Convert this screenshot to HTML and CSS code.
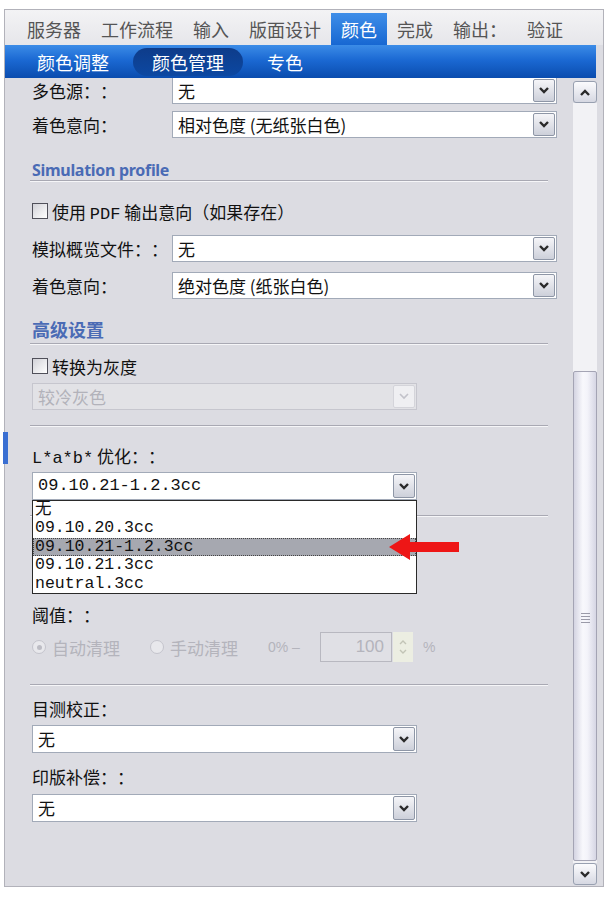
FILE: index.html
```html
<!DOCTYPE html>
<html lang="zh">
  <head>
    <meta charset="UTF-8" />
    <meta name="viewport" content="width=device-width, initial-scale=1.0" />
    <title>颜色管理</title>
    <link rel="stylesheet" href="styles.css">
  </head>
  <body>
    <div class="panel">
      <div class="tabs">
        <span class="tab">服务器</span>
        <span class="tab">工作流程</span>
        <span class="tab">输入</span>
        <span class="tab">版面设计</span>
        <span class="tab active">颜色</span>
        <span class="tab">完成</span>
        <span class="tab">输出：</span>
        <span class="tab">验证</span>
      </div>

      <div class="subtabs">
        <span class="subtab">颜色调整</span>
        <span class="subtab current">颜色管理</span>
        <span class="subtab">专色</span>
      </div>

      <div class="body">
        <div class="marker"></div>

        <div class="content">
          <div class="row row-a">
            <span class="label">多色源：：</span>
            <div class="select">
              <span class="value">无</span>
              <span class="arrow"><svg width="10" height="7" viewBox="0 0 10 7"><polyline points="1,1 5,5 9,1" /></svg></span>
            </div>
          </div>
          <div class="row row-b">
            <span class="label">着色意向：</span>
            <div class="select">
              <span class="value">相对色度 (无纸张白色)</span>
              <span class="arrow"><svg width="10" height="7" viewBox="0 0 10 7"><polyline points="1,1 5,5 9,1" /></svg></span>
            </div>
          </div>

          <div class="section-title en sim-title">Simulation profile</div>

          <div class="check-row check-pdf">
            <span class="checkbox"></span>
            <span>使用 <span class="mono">PDF</span> 输出意向（如果存在）</span>
          </div>

          <div class="row row-c">
            <span class="label">模拟概览文件：：</span>
            <div class="select">
              <span class="value">无</span>
              <span class="arrow"><svg width="10" height="7" viewBox="0 0 10 7"><polyline points="1,1 5,5 9,1" /></svg></span>
            </div>
          </div>
          <div class="row row-d">
            <span class="label">着色意向：</span>
            <div class="select">
              <span class="value">绝对色度 (纸张白色)</span>
              <span class="arrow"><svg width="10" height="7" viewBox="0 0 10 7"><polyline points="1,1 5,5 9,1" /></svg></span>
            </div>
          </div>

          <div class="section-title cn adv-title">高级设置</div>

          <div class="check-row check-gray">
            <span class="checkbox"></span>
            <span>转换为灰度</span>
          </div>

          <div class="select disabled gray-select">
            <span class="value">较冷灰色</span>
            <span class="arrow"><svg width="10" height="7" viewBox="0 0 10 7"><polyline points="1,1 5,5 9,1" /></svg></span>
          </div>

          <div class="separator sep-1"></div>

          <div class="label-line lab-label"><span class="mono">L*a*b*</span> 优化：：</div>

          <div class="select-wrap">
            <div class="select tall">
              <span class="value mono">09.10.21-1.2.3cc</span>
              <span class="arrow"><svg width="10" height="7" viewBox="0 0 10 7"><polyline points="1,1 5,5 9,1" /></svg></span>
            </div>
            <div class="dropdown mono">
              <div class="item">无</div>
              <div class="item">09.10.20.3cc</div>
              <div class="item sel">09.10.21-1.2.3cc</div>
              <div class="item">09.10.21.3cc</div>
              <div class="item">neutral.3cc</div>
            </div>
            <svg class="pointer" width="70" height="26" viewBox="0 0 70 26">
              <path d="M0 13 L21 0 L21 8 L70 8 L70 18 L21 18 L21 26 Z" />
            </svg>
          </div>

          <div class="separator sep-2"></div>

          <div class="label-line threshold-label">阈值：：</div>

          <div class="radio-row">
            <span class="radio on"></span>
            <span class="radio-label">自动清理</span>
            <span class="radio"></span>
            <span class="radio-label">手动清理</span>
            <span class="range">0% –</span>
            <span class="num">100</span>
            <span class="spin">
              <svg width="8" height="5" viewBox="0 0 8 5"><polyline points="1,4 4,1 7,4" /></svg>
              <svg width="8" height="5" viewBox="0 0 8 5"><polyline points="1,1 4,4 7,1" /></svg>
            </span>
            <span class="percent">%</span>
          </div>

          <div class="separator sep-3"></div>

          <div class="label-line visual-label">目测校正：</div>
          <div class="select tall visual-select">
            <span class="value">无</span>
            <span class="arrow"><svg width="10" height="7" viewBox="0 0 10 7"><polyline points="1,1 5,5 9,1" /></svg></span>
          </div>

          <div class="label-line plate-label">印版补偿：：</div>
          <div class="select tall plate-select">
            <span class="value">无</span>
            <span class="arrow"><svg width="10" height="7" viewBox="0 0 10 7"><polyline points="1,1 5,5 9,1" /></svg></span>
          </div>
        </div>

        <div class="scrollbar">
          <div class="sb-btn up"><svg width="10" height="7" viewBox="0 0 10 7"><polyline points="1,6 5,2 9,6" /></svg></div>
          <div class="sb-track">
            <div class="sb-thumb"><div class="grip"></div></div>
          </div>
          <div class="sb-btn down"><svg width="10" height="7" viewBox="0 0 10 7"><polyline points="1,1 5,5 9,1" /></svg></div>
        </div>
      </div>
    </div>
  </body>
</html>
```

FILE: styles.css
```css
* {
    box-sizing: border-box;
}

body {
    margin: 0;
    background: #fff;
    font-family: "Noto Sans CJK SC", sans-serif;
    color: #111;
    text-spacing-trim: space-all;
}

.mono {
    font-family: "Liberation Mono", "Noto Sans CJK SC", monospace;
}

.panel {
    width: 600px;
    height: 878px;
    margin: 9px 0 0 4px;
    border: 1px solid #b2b2ba;
    background: #dcdce2;
    display: flex;
    flex-direction: column;
}

/* top tabs */
.tabs {
    height: 35px;
    padding: 3px 0 0 12px;
    display: flex;
    background: linear-gradient(#f3f3f5, #e6e6ea);
    flex-shrink: 0;
}

.tab {
    padding: 0 10px;
    height: 32px;
    line-height: 32px;
    font-size: 18px;
    color: #555;
}

.tab.active {
    background: linear-gradient(#3f8ee8, #1767d2);
    color: #fff;
}

.subtabs {
    height: 33px;
    margin-right: 7px;
    padding-left: 13px;
    display: flex;
    align-items: center;
    gap: 5px;
    background: linear-gradient(#3c8ce7 0%, #1b69d3 45%, #0a4cae 100%);
    flex-shrink: 0;
}

.subtab {
    padding: 0 19px;
    height: 28px;
    line-height: 28px;
    font-size: 18px;
    color: #fff;
    border-radius: 14px;
}

.subtab.current {
    background: linear-gradient(#0e3c8a, #0c48a2);
}

/* body */
.body {
    flex: 1;
    min-height: 0;
    display: flex;
    position: relative;
}

.marker {
    position: absolute;
    left: -2px;
    top: 354px;
    width: 5px;
    height: 32px;
    background: #3a6fd2;
}

.content {
    flex: 1;
    overflow: hidden;
    padding-left: 27px;
    display: flex;
    flex-direction: column;
}

.content > * {
    flex-shrink: 0;
}

.row {
    display: flex;
    align-items: center;
}

.row .label {
    width: 140px;
    font-size: 17px;
    white-space: nowrap;
}

.select {
    width: 385px;
    height: 27px;
    display: flex;
    background: #fff;
    border: 1px solid #a2aab8;
    font-size: 17px;
}

.select.tall {
    height: 28px;
}

.select .value {
    flex: 1;
    padding-left: 5px;
    line-height: 25px;
    white-space: nowrap;
}

.select .arrow {
    width: 22px;
    margin: 1px 1px 1px 0;
    border: 1px solid #8e96a6;
    border-radius: 2px;
    background: linear-gradient(#f5f5f8, #cdd0da);
    display: flex;
    align-items: center;
    justify-content: center;
}

.select .arrow polyline,
.sb-btn polyline {
    fill: none;
    stroke: #2a2a2a;
    stroke-width: 2.4;
}

.select.disabled {
    background: #e2e2e6;
    border-color: #c6c6ce;
    color: #b2b2ba;
}

.select.disabled .arrow {
    border-color: #d4d4da;
    background: #efeff2;
}

.select.disabled .arrow polyline {
    stroke: #c2c2ca;
    stroke-width: 1.6;
}

.section-title {
    width: 518px;
    margin-left: -2px;
    padding-left: 2px;
    height: 21px;
    line-height: 20px;
    border-bottom: 1px solid #a9a9b3;
    box-shadow: 0 1px 0 #f6f6f8;
    color: #4a6bb5;
    font-weight: 700;
}

.section-title.en {
    font-family: "Noto Sans", sans-serif;
    font-size: 16px;
    letter-spacing: -0.3px;
}

.section-title.cn {
    height: 25px;
    padding-bottom: 4px;
    font-size: 18px;
}

.check-row {
    display: flex;
    align-items: center;
    height: 20px;
    font-size: 17px;
}

.checkbox {
    width: 16px;
    height: 16px;
    margin-right: 4px;
    border: 1px solid #50505a;
    background: linear-gradient(135deg, #d2d2d8, #fff);
}

.separator {
    width: 518px;
    margin-left: -2px;
    border-top: 1px solid #a9a9b3;
    border-bottom: 1px solid #f6f6f8;
}

.label-line {
    height: 20px;
    line-height: 20px;
    font-size: 17px;
}

/* dropdown list */
.select-wrap {
    position: relative;
    width: 385px;
}

.dropdown {
    position: absolute;
    top: 100%;
    left: 0;
    width: 385px;
    z-index: 2;
    background: #fff;
    border: 1px solid #2a2a2a;
    font-size: 16.5px;
}

.dropdown .item {
    height: 18.4px;
    line-height: 18px;
    padding-left: 2px;
    white-space: nowrap;
}

.dropdown .item.sel {
    background: #a6a8b0;
    outline: 1px dotted #444;
    outline-offset: -1px;
}

.pointer {
    position: absolute;
    left: 357px;
    top: 62px;
    z-index: 3;
}

.pointer path {
    fill: #ee1616;
}

/* radio row */
.radio-row {
    display: flex;
    align-items: center;
    height: 30px;
    font-size: 17px;
    color: #b4b4bc;
}

.radio {
    width: 14px;
    height: 14px;
    margin-right: 6px;
    border-radius: 50%;
    border: 1px solid #c4c4cc;
    background: #e8e8ec;
    display: flex;
    align-items: center;
    justify-content: center;
}

.radio.on::after {
    content: "";
    width: 5px;
    height: 5px;
    border-radius: 50%;
    background: #bcbcc4;
}

.radio-label {
    margin-right: 30px;
}

.range {
    width: 52px;
    font-family: "Liberation Sans", sans-serif;
    font-size: 14px;
}

.num {
    width: 72px;
    height: 30px;
    padding-right: 7px;
    border: 1px solid #b8b8c0;
    background: #e0e0e5;
    text-align: right;
    line-height: 28px;
    font-family: "Liberation Sans", sans-serif;
    font-size: 17px;
}

.spin {
    width: 20px;
    height: 30px;
    margin-left: 1px;
    background: #eceee2;
    display: flex;
    flex-direction: column;
    align-items: center;
    justify-content: center;
    gap: 4px;
}

.spin polyline {
    fill: none;
    stroke: #c2c4b6;
    stroke-width: 1.4;
}

.percent {
    margin-left: 10px;
    font-family: "Liberation Sans", sans-serif;
    font-size: 14px;
}

/* vertical spacing, top to bottom */
.row-a { margin-top: -1px; }
.row-b { margin-top: 7px; }
.sim-title { margin-top: 22px; }
.check-pdf { margin-top: 20px; }
.row-c { margin-top: 14px; }
.row-d { margin-top: 10px; }
.adv-title { margin-top: 20px; }
.check-gray { margin-top: 12px; }
.gray-select { margin-top: 7px; }
.sep-1 { margin-top: 15px; }
.lab-label { margin-top: 19px; }
.select-wrap { margin-top: 6px; }
.sep-2 { margin-top: 15px; }
.threshold-label { margin-top: 88px; }
.radio-row { margin-top: 7px; }
.sep-3 { margin-top: 22px; }
.visual-label { margin-top: 13px; }
.visual-select { margin-top: 6px; }
.plate-label { margin-top: 14px; }
.plate-select { margin-top: 7px; }

/* scrollbar */
.scrollbar {
    width: 32px;
    padding: 0 6px 0 2px;
    display: flex;
    flex-direction: column;
}

.sb-btn {
    height: 22px;
    flex-shrink: 0;
    border: 1px solid #98a0b0;
    border-radius: 3px;
    background: linear-gradient(#fbfbfd, #d6d8e2);
    display: flex;
    align-items: center;
    justify-content: center;
}

.sb-btn.up {
    margin-top: 3px;
}

.sb-btn.down {
    margin-bottom: 1px;
}

.sb-track {
    flex: 1;
    background: #f2f2f5;
    display: flex;
    flex-direction: column;
}

.sb-thumb {
    flex: 1;
    margin: 268px 0 2px;
    padding-top: 241px;
    border: 1px solid #a4a4b4;
    border-radius: 2px;
    background: linear-gradient(90deg, #d4d4e2, #f8f8fc 40%, #f4f4fa 60%, #d6d6e4);
    display: flex;
    justify-content: center;
}

.grip {
    width: 9px;
    height: 12px;
    background: repeating-linear-gradient(#9a9aa8 0 1px, transparent 1px 3px);
}
```
